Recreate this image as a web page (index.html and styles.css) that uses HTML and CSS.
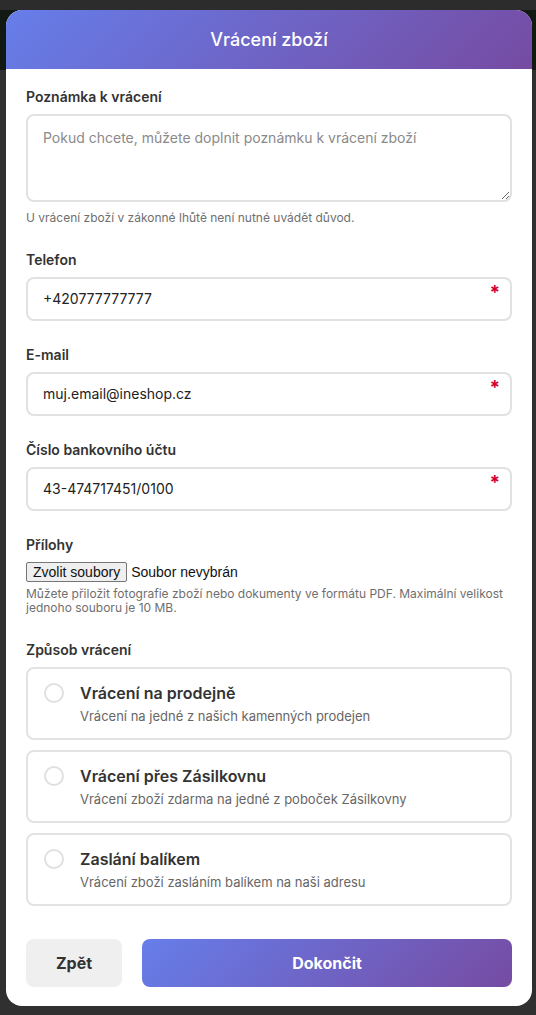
FILE: index.html
```html
<!DOCTYPE html>
<html lang="cs">
<head>
<meta charset="utf-8">
<title>Vrácení zboží</title>
<link rel="stylesheet" href="styles.css">
</head>
<body>
<div class="modal">
  <div class="modal-header">Vrácení zboží</div>
  <div class="modal-body">
    <div class="group">
      <label class="label">Poznámka k vrácení</label>
      <textarea class="textarea" placeholder="Pokud chcete, můžete doplnit poznámku k vrácení zboží"></textarea>
      <div class="hint hint-first">U vrácení zboží v zákonné lhůtě není nutné uvádět důvod.</div>
    </div>
    <div class="group">
      <label class="label">Telefon</label>
      <div class="field"><input class="input" type="text" value="+420777777777"><span class="req">*</span></div>
    </div>
    <div class="group">
      <label class="label">E-mail</label>
      <div class="field"><input class="input" type="text" value="muj.email@ineshop.cz"><span class="req">*</span></div>
    </div>
    <div class="group">
      <label class="label">Číslo bankovního účtu</label>
      <div class="field"><input class="input" type="text" value="43-474717451/0100"><span class="req">*</span></div>
    </div>
    <div class="group">
      <label class="label">Přílohy</label>
      <div class="file-row"><button class="file-btn" type="button">Zvolit soubory</button><span class="file-name">Soubor nevybrán</span></div>
      <div class="hint hint-file">Můžete přiložit fotografie zboží nebo dokumenty ve formátu PDF. Maximální velikost jednoho souboru je 10 MB.</div>
    </div>
    <div class="group group-last">
      <label class="label">Způsob vrácení</label>
      <div class="options">
        <div class="option">
          <span class="radio"></span>
          <div class="option-text">
            <div class="option-title">Vrácení na prodejně</div>
            <div class="option-desc">Vrácení na jedné z našich kamenných prodejen</div>
          </div>
        </div>
        <div class="option">
          <span class="radio"></span>
          <div class="option-text">
            <div class="option-title">Vrácení přes Zásilkovnu</div>
            <div class="option-desc">Vrácení zboží zdarma na jedné z poboček Zásilkovny</div>
          </div>
        </div>
        <div class="option">
          <span class="radio"></span>
          <div class="option-text">
            <div class="option-title">Zaslání balíkem</div>
            <div class="option-desc">Vrácení zboží zasláním balíkem na naši adresu</div>
          </div>
        </div>
      </div>
    </div>
    <div class="actions">
      <button class="btn btn-back" type="button">Zpět</button>
      <button class="btn btn-finish" type="button">Dokončit</button>
    </div>
  </div>
</div>
</body>
</html>
```
FILE: styles.css
```css
* { box-sizing: border-box; }
html, body { margin: 0; padding: 0; }
body {
  width: 536px;
  height: 1015px;
  overflow: hidden;
  font-family: Inter, "Noto Sans", sans-serif;
  background: linear-gradient(to bottom, #2c2c2c 0, #2c2c2c 10px, #121812 10px, #121812 70px, #303030 70px);
  padding: 10px 4px 0 6px;
}
.modal {
  width: 526px;
  height: 996px;
  background: #fff;
  border-radius: 16px;
  overflow: hidden;
  display: flex;
  flex-direction: column;
}
.modal-header {
  height: 59px;
  flex: none;
  display: flex;
  align-items: center;
  justify-content: center;
  color: #fff;
  font-size: 18px;
  font-weight: 500;
  background: linear-gradient(135deg, #667eea 0%, #764ba2 100%);
}
.modal-body {
  padding: 18px 20px 19px;
}
.group { margin-bottom: 24px; }
.group-last { margin-bottom: 33px; }
.label {
  display: block;
  font-size: 14px;
  line-height: 20px;
  font-weight: 600;
  color: #333;
  margin-bottom: 7px;
}
.textarea {
  display: block;
  width: 100%;
  height: 88px;
  border: 2px solid #e1e1e1;
  border-radius: 8px;
  padding: 12px 15px;
  font-family: Inter, "Noto Sans", sans-serif;
  font-size: 14px;
  line-height: 20px;
  color: #333;
  resize: vertical;
  outline: none;
}
.textarea::placeholder { color: #8a8a8a; }
.hint {
  font-size: 12px;
  line-height: 14.5px;
  color: #6f6f6f;
}
.hint-first { margin-top: 9px; }
.hint-file { margin-top: 5px; }
.field { position: relative; }
.input {
  display: block;
  width: 100%;
  height: 44px;
  border: 2px solid #e1e1e1;
  border-radius: 8px;
  padding: 0 15px;
  font-family: Inter, "Noto Sans", sans-serif;
  font-size: 14px;
  color: #222;
  outline: none;
  background: #fff;
}
.req {
  position: absolute;
  right: 12px;
  top: 6px;
  color: #d3002d;
  font-size: 19px;
  font-weight: 700;
  line-height: 20px;
}
.file-row {
  display: flex;
  align-items: center;
  height: 20px;
  font-family: "Liberation Sans", Arial, sans-serif;
  font-size: 14px;
  color: #111;
}
.file-btn {
  height: 20px;
  padding: 0 6px;
  margin-right: 4px;
  border: 1px solid #767676;
  border-radius: 2px;
  background: #efefef;
  font-family: "Liberation Sans", Arial, sans-serif;
  font-size: 14px;
  color: #111;
}
.options {
  display: flex;
  flex-direction: column;
  gap: 10px;
}
.option {
  display: flex;
  align-items: flex-start;
  height: 73px;
  border: 2px solid #e3e3e3;
  border-radius: 8px;
  padding: 14px 16px 0;
  gap: 16px;
}
.radio {
  flex: none;
  width: 20px;
  height: 20px;
  border: 2px solid #e0e0e0;
  border-radius: 50%;
}
.option-title {
  font-size: 16px;
  line-height: 20px;
  font-weight: 600;
  color: #333;
}
.option-desc {
  margin-top: 4px;
  font-size: 13px;
  line-height: 18px;
  color: #666;
}
.actions {
  display: flex;
  gap: 20px;
}
.btn {
  height: 48px;
  border: none;
  border-radius: 8px;
  font-family: Inter, "Noto Sans", sans-serif;
  font-size: 16px;
  font-weight: 700;
}
.btn-back {
  width: 96px;
  background: #efefef;
  color: #333;
}
.btn-finish {
  flex: 1;
  color: #fff;
  background: linear-gradient(135deg, #667eea 0%, #764ba2 100%);
}
```
